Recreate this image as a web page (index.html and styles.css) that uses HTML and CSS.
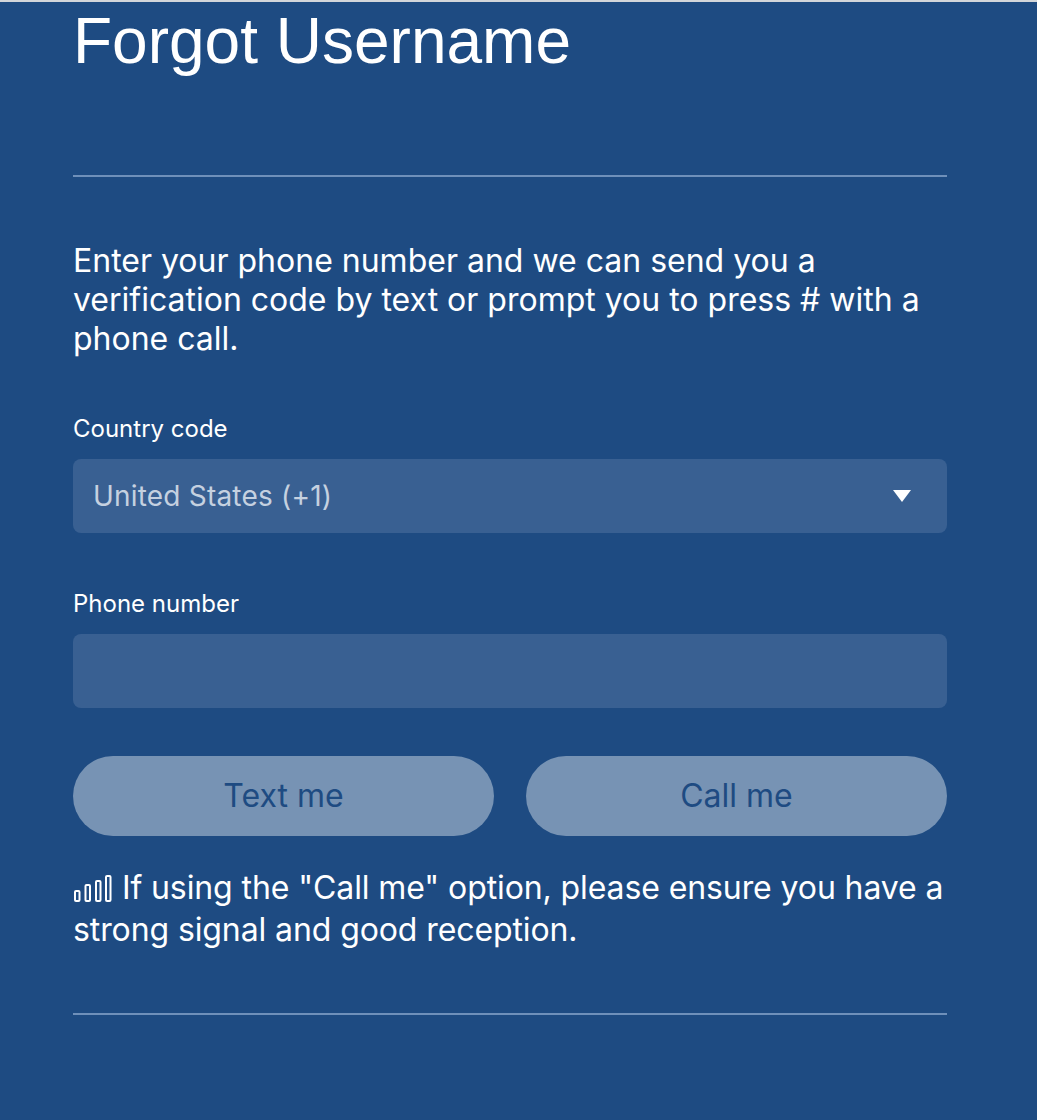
FILE: index.html
```html
<!DOCTYPE html>
<html lang="en">
<head>
    <meta charset="UTF-8">
    <meta name="viewport" content="width=device-width, initial-scale=1.0">
    <title>Forgot Username</title>
    <link rel="stylesheet" href="styles.css">
</head>
<body>
    <div class="topline"></div>
    <main class="container">
        <h1>Forgot Username</h1>
        <hr class="rule rule-top">

        <p class="intro">Enter your phone number and we can send you a verification code by text or prompt you to press # with a phone call.</p>

        <form class="form">
            <label class="field">
                <span class="field-label">Country code</span>
                <span class="select">
                    <span class="select-value">United States (+1)</span>
                    <span class="select-arrow"></span>
                </span>
            </label>

            <label class="field">
                <span class="field-label">Phone number</span>
                <input class="input" type="text">
            </label>

            <div class="buttons">
                <button class="btn" type="button" disabled>Text me</button>
                <button class="btn" type="button" disabled>Call me</button>
            </div>
        </form>

        <p class="note">
            <svg class="signal" width="39" height="27" viewBox="0 0 39 27" fill="none" stroke="#fff" stroke-width="2">
                <rect x="2" y="16" width="4.5" height="10" rx="1"/>
                <rect x="12.5" y="10" width="4.5" height="16" rx="1"/>
                <rect x="23" y="6" width="4.5" height="20" rx="1"/>
                <rect x="33" y="1" width="4.5" height="25" rx="1"/>
            </svg>
            If using the "Call me" option, please ensure you have a strong signal and good reception.
        </p>

        <hr class="rule rule-bottom">
    </main>
</body>
</html>
```

FILE: styles.css
```css
:root {
    --page-color: #1e4b82;
    --field-color: #396092;
    --button-color: #7793b4;
    --rule-color: #6f90ba;
}

html, body {
    height: 100%;
}

body {
    margin: 0;
    background-color: var(--page-color);
    color: #fff;
    font-family: Inter, 'Liberation Sans', Arial, sans-serif;
    overflow: hidden;
}

.topline {
    height: 2px;
    background-color: #d3d6da;
}

.container {
    width: 874px;
    margin-left: 73px;
}

h1 {
    margin: 0;
    padding-top: 2px;
    font-family: 'Liberation Sans', Arial, sans-serif;
    font-size: 64px;
    font-weight: 400;
    line-height: 74px;
    height: 171px;
}

.rule {
    height: 2px;
    margin: 0;
    border: 0;
    background-color: var(--rule-color);
}

.intro {
    margin: 64px 0 0;
    font-size: 32px;
    line-height: 39px;
}

.form {
    margin-top: 54px;
}

.field {
    display: block;
}

.field + .field {
    margin-top: 54px;
}

.field-label {
    display: block;
    font-size: 24px;
    line-height: 34px;
    margin-bottom: 13px;
}

.select,
.input {
    display: flex;
    align-items: center;
    box-sizing: border-box;
    width: 100%;
    height: 74px;
    padding: 0 36px 0 20px;
    border: 0;
    border-radius: 8px;
    background-color: var(--field-color);
    color: #c5d1e0;
    font-family: inherit;
    font-size: 28px;
    letter-spacing: 0.2px;
}

.select-value {
    flex: 1;
}

.select-arrow {
    width: 0;
    height: 0;
    border-left: 9px solid transparent;
    border-right: 9px solid transparent;
    border-top: 12px solid #fff;
}

.buttons {
    display: flex;
    gap: 32px;
    margin-top: 48px;
}

.btn {
    flex: 1;
    height: 80px;
    padding: 0 0 2px;
    border: 0;
    border-radius: 40px;
    background-color: var(--button-color);
    color: var(--page-color);
    font-family: inherit;
    font-size: 32px;
}

.note {
    margin: 31px 0 0;
    font-size: 32px;
    line-height: 42px;
    letter-spacing: -0.1px;
}

.signal {
    vertical-align: -3px;
    margin-right: 1px;
}

.rule-bottom {
    margin-top: 62px;
}
```
